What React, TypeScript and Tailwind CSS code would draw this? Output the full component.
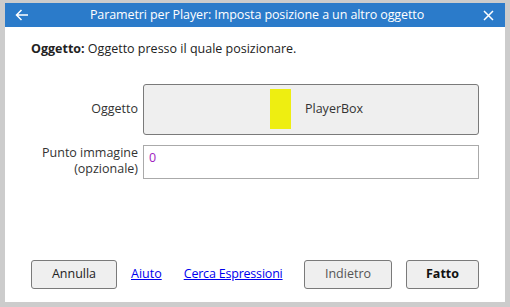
import React from 'react';

const font = { fontFamily: '"Open Sans", "Noto Sans", sans-serif' };

const App: React.FC = () => {
    return (
        <div className="w-[510px] h-[307px] bg-[#cccccc] pt-[3px] px-[5px] pb-[5px]" style={font}>
            <div className="h-full flex flex-col bg-white">
                {/* Title bar */}
                <div className="h-[24px] bg-[#2b7bca] flex items-center text-white">
                    <div className="w-[30px] flex justify-center pl-[4px]">
                        <svg width="14" height="12" viewBox="0 0 14 12" fill="none" stroke="white" strokeWidth="1.5">
                            <path d="M13 6H1.5M6.5 1L1.5 6l5 5" />
                        </svg>
                    </div>
                    <div className="flex-1 text-center text-[12.5px] tracking-[-0.1px] pl-[4px]">
                        Parametri per Player: Imposta posizione a un altro oggetto
                    </div>
                    <div className="w-[30px] flex justify-center pr-[4px]">
                        <svg width="11" height="11" viewBox="0 0 11 11" stroke="white" strokeWidth="1.5">
                            <path d="M1 1l9 9M10 1l-9 9" />
                        </svg>
                    </div>
                </div>

                <div className="flex-1 flex flex-col px-[26px] pt-[13px] text-[12.5px] text-[#222]">
                    <div>
                        <span className="font-bold">Oggetto:</span> Oggetto presso il quale posizionare.
                    </div>

                    <div className="mt-[25px] grid grid-cols-[107px_1fr] gap-x-[5px] gap-y-[10px]">
                        <div className="flex items-center justify-end text-[#333]">Oggetto</div>
                        <div className="h-[51px] rounded-[3px] border border-[#7a7a7a] bg-[#efefef] flex items-center pl-[126px]">
                            <div className="w-[21px] h-[40px] bg-[#eeee11]" />
                            <span className="ml-[14px] text-[#333]">PlayerBox</span>
                        </div>
                        <div className="text-right leading-[16px] text-[#333]">
                            Punto immagine
                            <br />
                            (opzionale)
                        </div>
                        <div className="h-[34px] border border-[#aaaaaa] pl-[5px] pt-[3px] text-[#a020c0]">0</div>
                    </div>

                    <div className="mt-auto mb-[13px] flex items-center">
                        <button className="shrink-0 w-[86px] h-[29px] rounded-[3px] border border-[#7a7a7a] bg-[#efefef] text-[#222]">
                            Annulla
                        </button>
                        <a className="shrink-0 ml-[14px] text-[#0000ee] underline cursor-pointer">Aiuto</a>
                        <a className="shrink-0 ml-[22px] text-[#0000ee] underline cursor-pointer tracking-[-0.2px]">Cerca Espressioni</a>
                        <div className="flex-1" />
                        <button className="shrink-0 w-[88px] min-w-[88px] h-[29px] rounded-[3px] border border-[#7a7a7a] bg-[#efefef] text-[#555]">
                            Indietro
                        </button>
                        <button className="shrink-0 ml-[14px] w-[73px] h-[29px] rounded-[3px] border border-[#7a7a7a] bg-[#efefef] font-bold text-[#111]">
                            Fatto
                        </button>
                    </div>
                </div>
            </div>
        </div>
    );
};

export default App;
